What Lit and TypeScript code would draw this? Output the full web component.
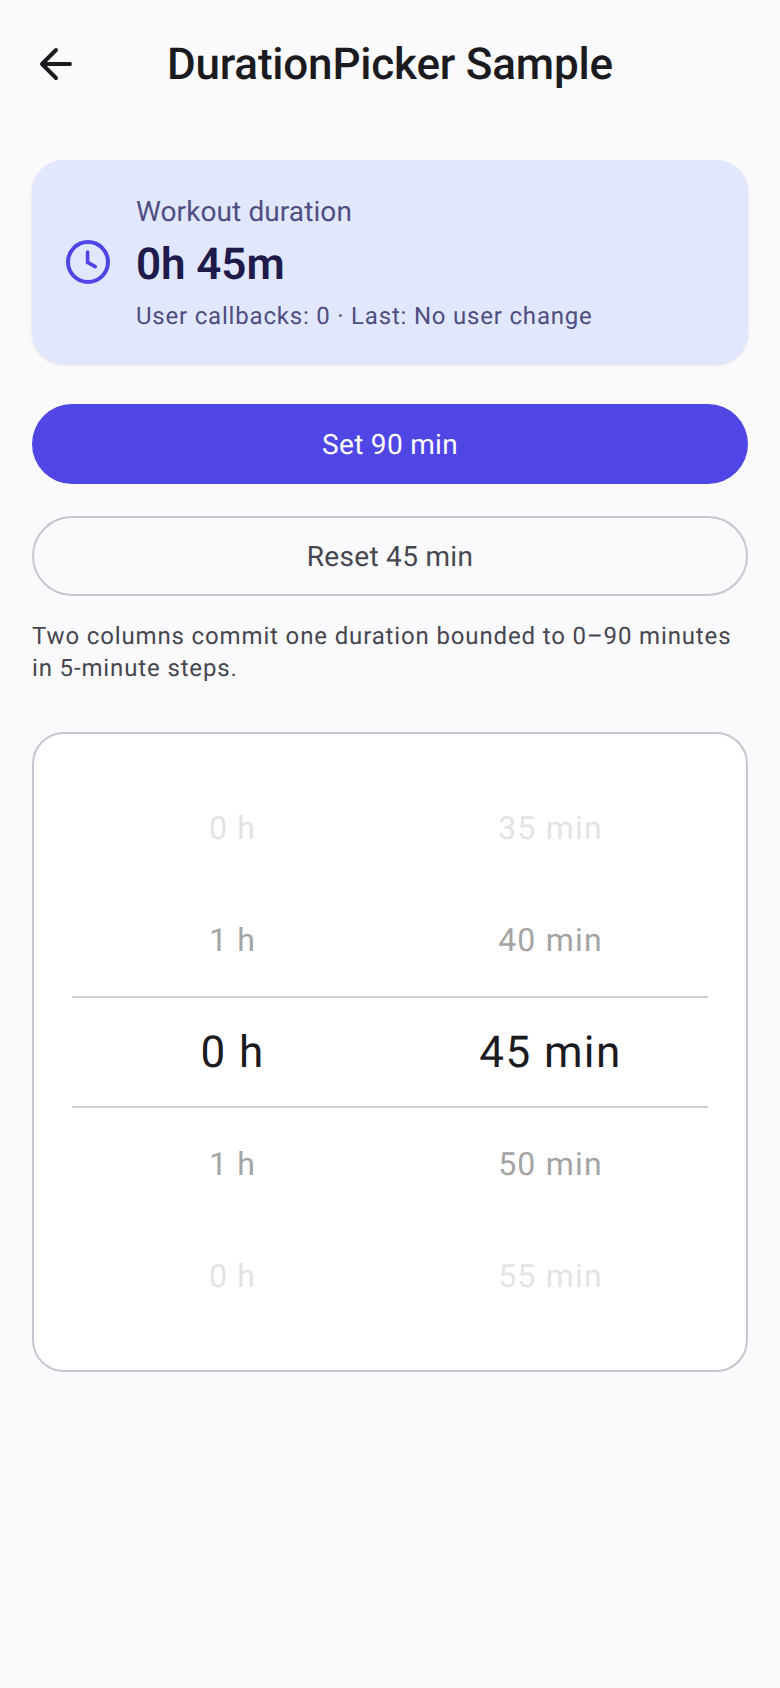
import { LitElement, html, css } from "lit";
import { customElement } from "lit/decorators.js";

const ROWS: Array<[string, string, string]> = [
  ["0 h", "35 min", "far"],
  ["1 h", "40 min", "near"],
  ["0 h", "45 min", "sel"],
  ["1 h", "50 min", "near"],
  ["0 h", "55 min", "far"],
];

@customElement("app-root")
export class AppRoot extends LitElement {
  static styles = css`
    :host {
      display: block;
      width: 780px;
      min-height: 1688px;
      background: #fafafd;
      font-family: Roboto, "Noto Sans", sans-serif;
      color: #1b1b1f;
      text-rendering: geometricPrecision;
    }
    .bar {
      display: flex;
      align-items: center;
      height: 128px;
      padding-left: 32px;
    }
    .bar svg { display: block; width: 48px; height: 48px; flex: none; }
    .title {
      margin-left: 87px;
      font-size: 44px;
      line-height: 56px;
      font-weight: 500;
      letter-spacing: -0.2px;
      white-space: nowrap;
    }
    .content {
      display: flex;
      flex-direction: column;
      padding: 32px 32px 0;
    }
    .card {
      display: flex;
      align-items: center;
      gap: 24px;
      height: 204px;
      box-sizing: border-box;
      padding: 32px;
      border-radius: 32px;
      background: #e0e7ff;
      box-shadow: 0 1px 3px rgba(0, 0, 0, 0.12);
    }
    .card svg { display: block; width: 48px; height: 48px; flex: none; }
    .info { display: flex; flex-direction: column; }
    .label {
      font-size: 28px;
      line-height: 40px;
      letter-spacing: 0.1px;
      color: #4f4e7f;
    }
    .value {
      font-size: 44px;
      line-height: 64px;
      font-weight: 600;
      letter-spacing: -0.1px;
      color: #1e1b4b;
    }
    .meta {
      margin-top: 4px;
      font-size: 24px;
      line-height: 32px;
      letter-spacing: 0.8px;
      color: #4f4e7f;
    }
    .btn {
      display: flex;
      align-items: center;
      justify-content: center;
      box-sizing: border-box;
      height: 80px;
      border-radius: 40px;
      font-size: 28px;
      font-weight: 400;
      letter-spacing: 0.3px;
    }
    .primary { margin-top: 40px; background: #4f46e5; color: #ffffff; font-weight: 450; }
    .outline {
      margin-top: 32px;
      border: 2px solid #cac4d0;
      color: #46464f;
    }
    .note {
      margin: 24px 0 0;
      font-size: 24px;
      line-height: 32px;
      letter-spacing: 0.86px;
      color: #46464f;
    }
    .picker {
      margin-top: 48px;
      box-sizing: border-box;
      padding: 38px;
      border: 2px solid #cac4d0;
      border-radius: 32px;
      background: #ffffff;
    }
    .row {
      display: grid;
      grid-template-columns: 1fr 1fr;
      box-sizing: border-box;
      height: 112px;
      align-items: center;
      justify-items: center;
      font-size: 32px;
      letter-spacing: 1.2px;
    }
    .row span { margin-left: 3px; }
    .far { color: #e3e3e4; }
    .near { color: #a4a4a5; }
    .sel {
      color: #1b1b1f;
      font-size: 44px;
      letter-spacing: 1.4px;
      border-top: 2px solid #d0d0d2;
      border-bottom: 2px solid #d0d0d2;
    }
  `;

  render() {
    return html`
      <div class="bar">
        <svg viewBox="0 0 24 24" fill="none" stroke="#1b1b1f" stroke-width="2" stroke-linecap="round" stroke-linejoin="round">
          <path d="M5 12h14M12 5l-7 7 7 7" />
        </svg>
        <div class="title">DurationPicker Sample</div>
      </div>
      <div class="content">
        <div class="card">
          <svg viewBox="0 0 24 24" fill="none" stroke="#4f46e5" stroke-linecap="round" stroke-linejoin="round">
            <circle cx="12" cy="12" r="10" stroke-width="2" />
            <path d="M11.8 7v5.2l3.8 2.1" stroke-width="1.8" />
          </svg>
          <div class="info">
            <div class="label">Workout duration</div>
            <div class="value">0h 45m</div>
            <div class="meta">User callbacks: 0 · Last: No user change</div>
          </div>
        </div>
        <div class="btn primary">Set 90 min</div>
        <div class="btn outline">Reset 45 min</div>
        <p class="note">Two columns commit one duration bounded to 0–90 minutes in 5-minute steps.</p>
        <div class="picker">
          ${ROWS.map(
            ([h, m, cls]) => html`<div class="row ${cls}"><span>${h}</span><span>${m}</span></div>`
          )}
        </div>
      </div>
    `;
  }
}
